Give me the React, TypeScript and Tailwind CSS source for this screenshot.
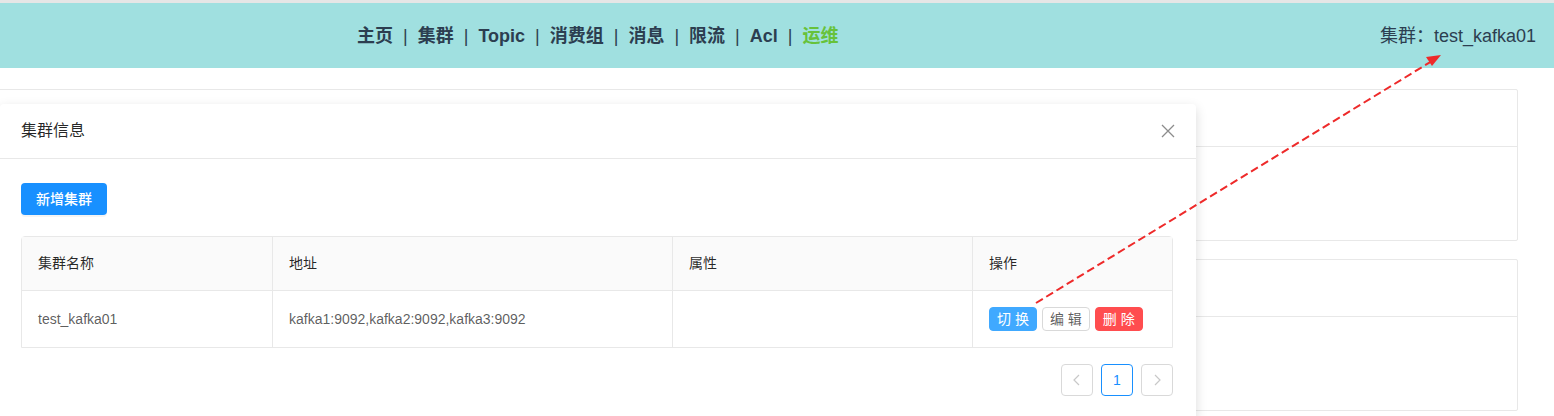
import React from 'react'

const font = { fontFamily: '"Liberation Sans", "Noto Sans CJK SC", sans-serif' }

const navItems = ['主页', '集群', 'Topic', '消费组', '消息', '限流', 'Acl', '运维']

function Header() {
  return (
    <div className="border-t-[3px] border-[#e6e6e6] bg-[#a0e0e0] h-[68px] flex items-center pt-[2px]">
      <nav className="ml-[357px] flex items-center text-[18px] text-[#2c3e50]">
        {navItems.map((item, i) => (
          <React.Fragment key={item}>
            {i > 0 && <span className="mx-[10px] font-normal">|</span>}
            <span className={'font-bold ' + (item === '运维' ? 'text-[#67c23a]' : '')}>{item}</span>
          </React.Fragment>
        ))}
      </nav>
      <div className="ml-auto mr-[18px] text-[18px] text-[#2c3e50]">集群：test_kafka01</div>
    </div>
  )
}

function BgCard() {
  return (
    <div className="border border-[#e8e8e8] rounded-[2px] bg-white">
      <div className="h-[57px] border-b border-[#e8e8e8]" />
      <div className="h-[93px]" />
    </div>
  )
}

function ActionButton({ label, kind }: { label: string; kind: 'primary' | 'default' | 'danger' }) {
  const styles = {
    primary: 'bg-[#40a9ff] border-[#40a9ff] text-white',
    default: 'bg-white border-[#d9d9d9] text-[rgba(0,0,0,0.65)]',
    danger: 'bg-[#ff4d4f] border-[#ff4d4f] text-white',
  }
  return (
    <button className={'h-[24px] px-[7px] border rounded-[4px] text-[14px] leading-[22px] ' + styles[kind]}>
      {label}
    </button>
  )
}

function ClusterModal() {
  return (
    <div className="absolute top-[104px] left-0 w-[1196px] bg-white rounded-[4px] shadow-[0_4px_12px_rgba(0,0,0,0.15)]">
      <div className="h-[55px] border-b border-[#e8e8e8] flex items-center pl-[21px] pr-[20px]">
        <span className="text-[16px] text-[rgba(0,0,0,0.85)]">集群信息</span>
        <svg className="ml-auto" width="16" height="16" viewBox="0 0 16 16">
          <path d="M2 2 L14 14 M14 2 L2 14" stroke="#8c8c8c" strokeWidth="1.3" />
        </svg>
      </div>
      <div className="pl-[21px] pr-[24px] pt-[24px] pb-[24px]">
        <button className="h-[32px] px-[15px] rounded-[4px] bg-[#1890ff] text-white text-[14px] font-medium shadow-[0_2px_0_rgba(0,0,0,0.045)]">
          新增集群
        </button>
        <table className="mt-[21px] w-[1152px] border-separate border-spacing-0 border border-[#e8e8e8] rounded-t-[4px] text-[14px]">
          <thead>
            <tr className="bg-[#fafafa] text-[rgba(0,0,0,0.85)] text-left">
              <th className="w-[251px] h-[54px] px-[16px] font-normal border-b border-r border-[#e8e8e8]">集群名称</th>
              <th className="w-[400px] px-[16px] font-normal border-b border-r border-[#e8e8e8]">地址</th>
              <th className="w-[300px] px-[16px] font-normal border-b border-r border-[#e8e8e8]">属性</th>
              <th className="px-[16px] font-normal border-b border-[#e8e8e8]">操作</th>
            </tr>
          </thead>
          <tbody className="text-[rgba(0,0,0,0.65)]">
            <tr>
              <td className="h-[56px] px-[16px] border-r border-[#e8e8e8]">test_kafka01</td>
              <td className="px-[16px] border-r border-[#e8e8e8]">kafka1:9092,kafka2:9092,kafka3:9092</td>
              <td className="px-[16px] border-r border-[#e8e8e8]"></td>
              <td className="px-[16px]">
                <div className="flex gap-[5px]">
                  <ActionButton label="切 换" kind="primary" />
                  <ActionButton label="编 辑" kind="default" />
                  <ActionButton label="删 除" kind="danger" />
                </div>
              </td>
            </tr>
          </tbody>
        </table>
        <div className="mt-[16px] w-[1152px] flex justify-end gap-[8px]">
          <div className="w-[32px] h-[32px] border border-[#d9d9d9] rounded-[4px] flex items-center justify-center">
            <svg width="10" height="12" viewBox="0 0 10 12">
              <path d="M7 1 L2 6 L7 11" fill="none" stroke="#c8c8c8" strokeWidth="1.2" />
            </svg>
          </div>
          <div className="w-[32px] h-[32px] border border-[#1890ff] rounded-[4px] flex items-center justify-center text-[14px] text-[#1890ff]">
            1
          </div>
          <div className="w-[32px] h-[32px] border border-[#d9d9d9] rounded-[4px] flex items-center justify-center">
            <svg width="10" height="12" viewBox="0 0 10 12">
              <path d="M3 1 L8 6 L3 11" fill="none" stroke="#c8c8c8" strokeWidth="1.2" />
            </svg>
          </div>
        </div>
      </div>
    </div>
  )
}

export default function App() {
  return (
    <div className="relative h-[416px] overflow-hidden bg-white" style={font}>
      <Header />
      <div className="mt-[21px] ml-[-8px] mr-[36px] flex flex-col gap-[18px]">
        <BgCard />
        <BgCard />
      </div>
      <ClusterModal />
      {/* red annotation arrow */}
      <svg className="absolute inset-0 pointer-events-none" width="1554" height="416">
        <line x1="1036" y1="303" x2="1432" y2="61" stroke="#ee2a2a" strokeWidth="2" strokeDasharray="8 4" />
        <path d="M1441 55 L1426 57 L1432 66 Z" fill="#ee2a2a" />
      </svg>
    </div>
  )
}
